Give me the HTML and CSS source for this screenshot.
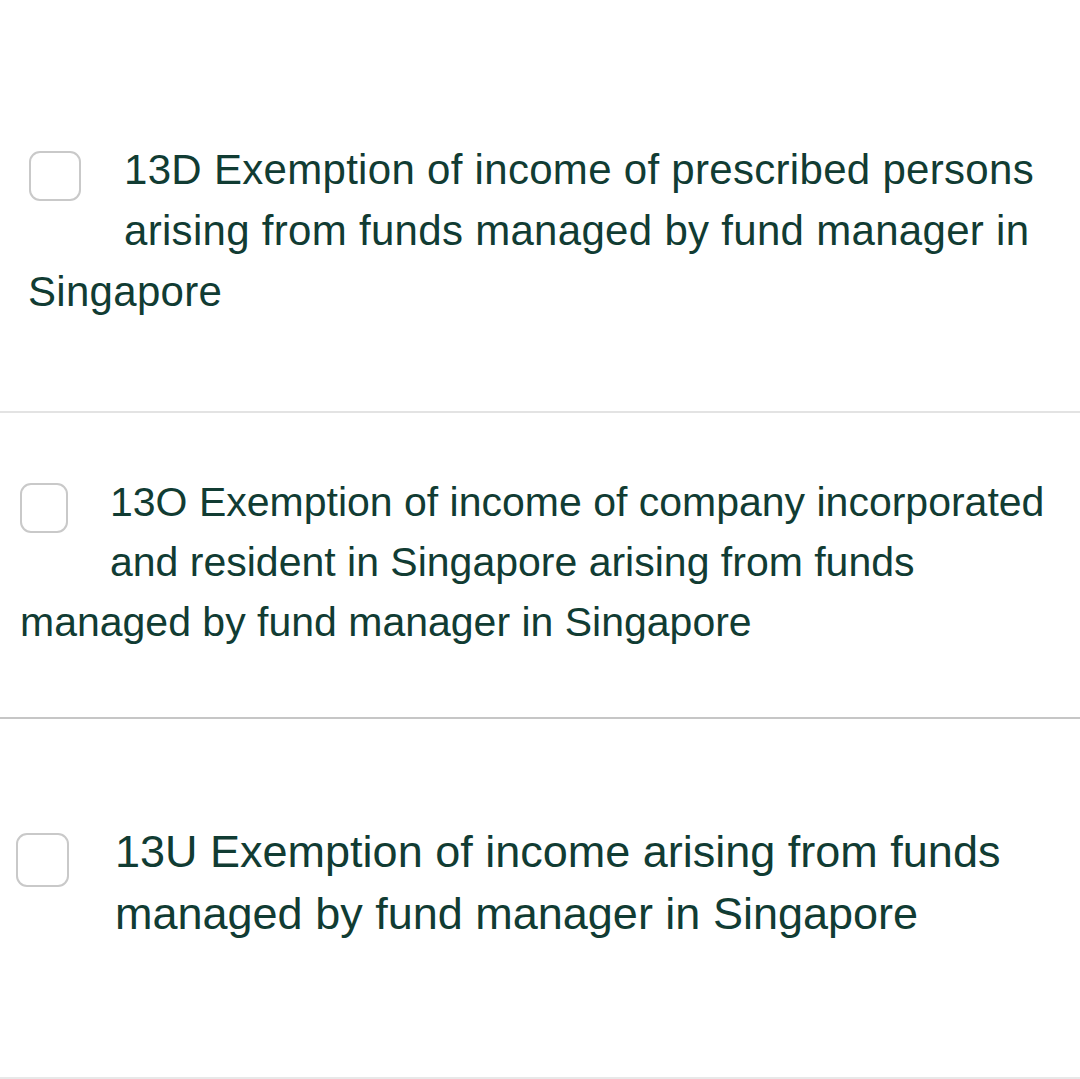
FILE: index.html
```html
<!DOCTYPE html>
<html lang="en">
<head>
<meta charset="utf-8">
<title>Exemptions</title>
<link rel="stylesheet" href="styles.css">
</head>
<body>
<div class="options">
  <section class="item item-d">
    <p class="opt"><span class="box" role="checkbox" aria-checked="false"></span>13D Exemption of income of prescribed persons arising from funds managed by fund manager in Singapore</p>
  </section>
  <section class="item item-o">
    <p class="opt"><span class="box" role="checkbox" aria-checked="false"></span>13O Exemption of income of company incorporated and resident in Singapore arising from funds managed by fund manager in Singapore</p>
  </section>
  <section class="item item-u">
    <p class="opt"><span class="box" role="checkbox" aria-checked="false"></span>13U Exemption of income arising from funds managed by fund manager in Singapore</p>
  </section>
</div>
</body>
</html>
```

FILE: styles.css
```css
html, body {
  margin: 0;
  padding: 0;
  background: #ffffff;
}

body {
  font-family: "Liberation Sans", Arial, Helvetica, sans-serif;
  color: #113c33;
  width: 1080px;
  overflow: hidden;
}

.options {
  display: flex;
  flex-direction: column;
}

.item {
  border-bottom: 2px solid #e3e3e3;
}

.opt {
  margin: 0;
}

.box {
  float: left;
  box-sizing: border-box;
  border: 2px solid #c9c9c9;
  border-radius: 11px;
  background: #ffffff;
}

/* 13D */
.item-d {
  padding: 139px 0 89px 28px;
}
.item-d .opt {
  font-size: 42px;
  line-height: 61px;
  letter-spacing: 0.3px;
}
.item-d .box {
  width: 52px;
  height: 50px;
  margin: 12px 43px 20px 1px;
}

/* 13O */
.item-o {
  padding: 59px 0 65px 20px;
  border-bottom-color: #c6c6c6;
}
.item-o .opt {
  font-size: 41px;
  line-height: 60px;
}
.item-o .box {
  width: 48px;
  height: 50px;
  margin: 11px 42px 20px 0;
}

/* 13U */
.item-u {
  padding: 102px 0 132px 16px;
  border-bottom-color: #e8e8e8;
}
.item-u .opt {
  font-size: 45px;
  line-height: 62px;
}
.item-u .box {
  width: 53px;
  height: 54px;
  margin: 12px 46px 10px 0;
}
```
